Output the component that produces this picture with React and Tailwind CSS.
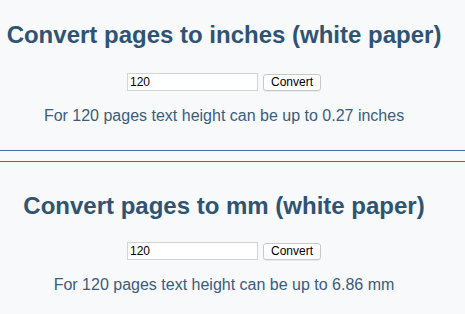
export default function App() {
  const Section = ({ title, result, top, titleGap }) => (
    <div className={`w-[448px] flex flex-col items-center ${top}`}>
      <h2 className="text-[24px] leading-[28px] font-bold text-[#2f5373] whitespace-nowrap">{title}</h2>
      <div className={`flex items-center gap-[5px] ${titleGap}`}>
        <div className="w-[131px] h-[18px] bg-white border border-[#d4d4d4] flex items-center pl-[2px] text-[12px] text-black">120</div>
        <div className="w-[58px] h-[17px] bg-white border border-[#c8c8c8] rounded-[3px] flex items-center justify-center text-[12px] text-black shadow-[0_1px_0_rgba(0,0,0,0.05)]">Convert</div>
      </div>
      <p className="mt-[16px] text-[16px] leading-[18px] text-[#3b5c7b] whitespace-nowrap">{result}</p>
    </div>
  );
  return (
    <div className="w-[465px] h-[314px] bg-[#f7f9fb] overflow-hidden" style={{ fontFamily: '"Liberation Sans", Arial, sans-serif' }}>
      <Section
        title="Convert pages to inches (white paper)"
        result="For 120 pages text height can be up to 0.27 inches"
        top="pt-[21px]"
        titleGap="mt-[24px]"
      />
      <div className="mt-[25px] h-[1px] bg-[#4d6c90]" />
      <div className="mt-[10px] h-[1px] bg-[#4d6c90]" />
      <Section
        title="Convert pages to mm (white paper)"
        result="For 120 pages text height can be up to 6.86 mm"
        top="pt-[30px]"
        titleGap="mt-[22px]"
      />
    </div>
  );
}
